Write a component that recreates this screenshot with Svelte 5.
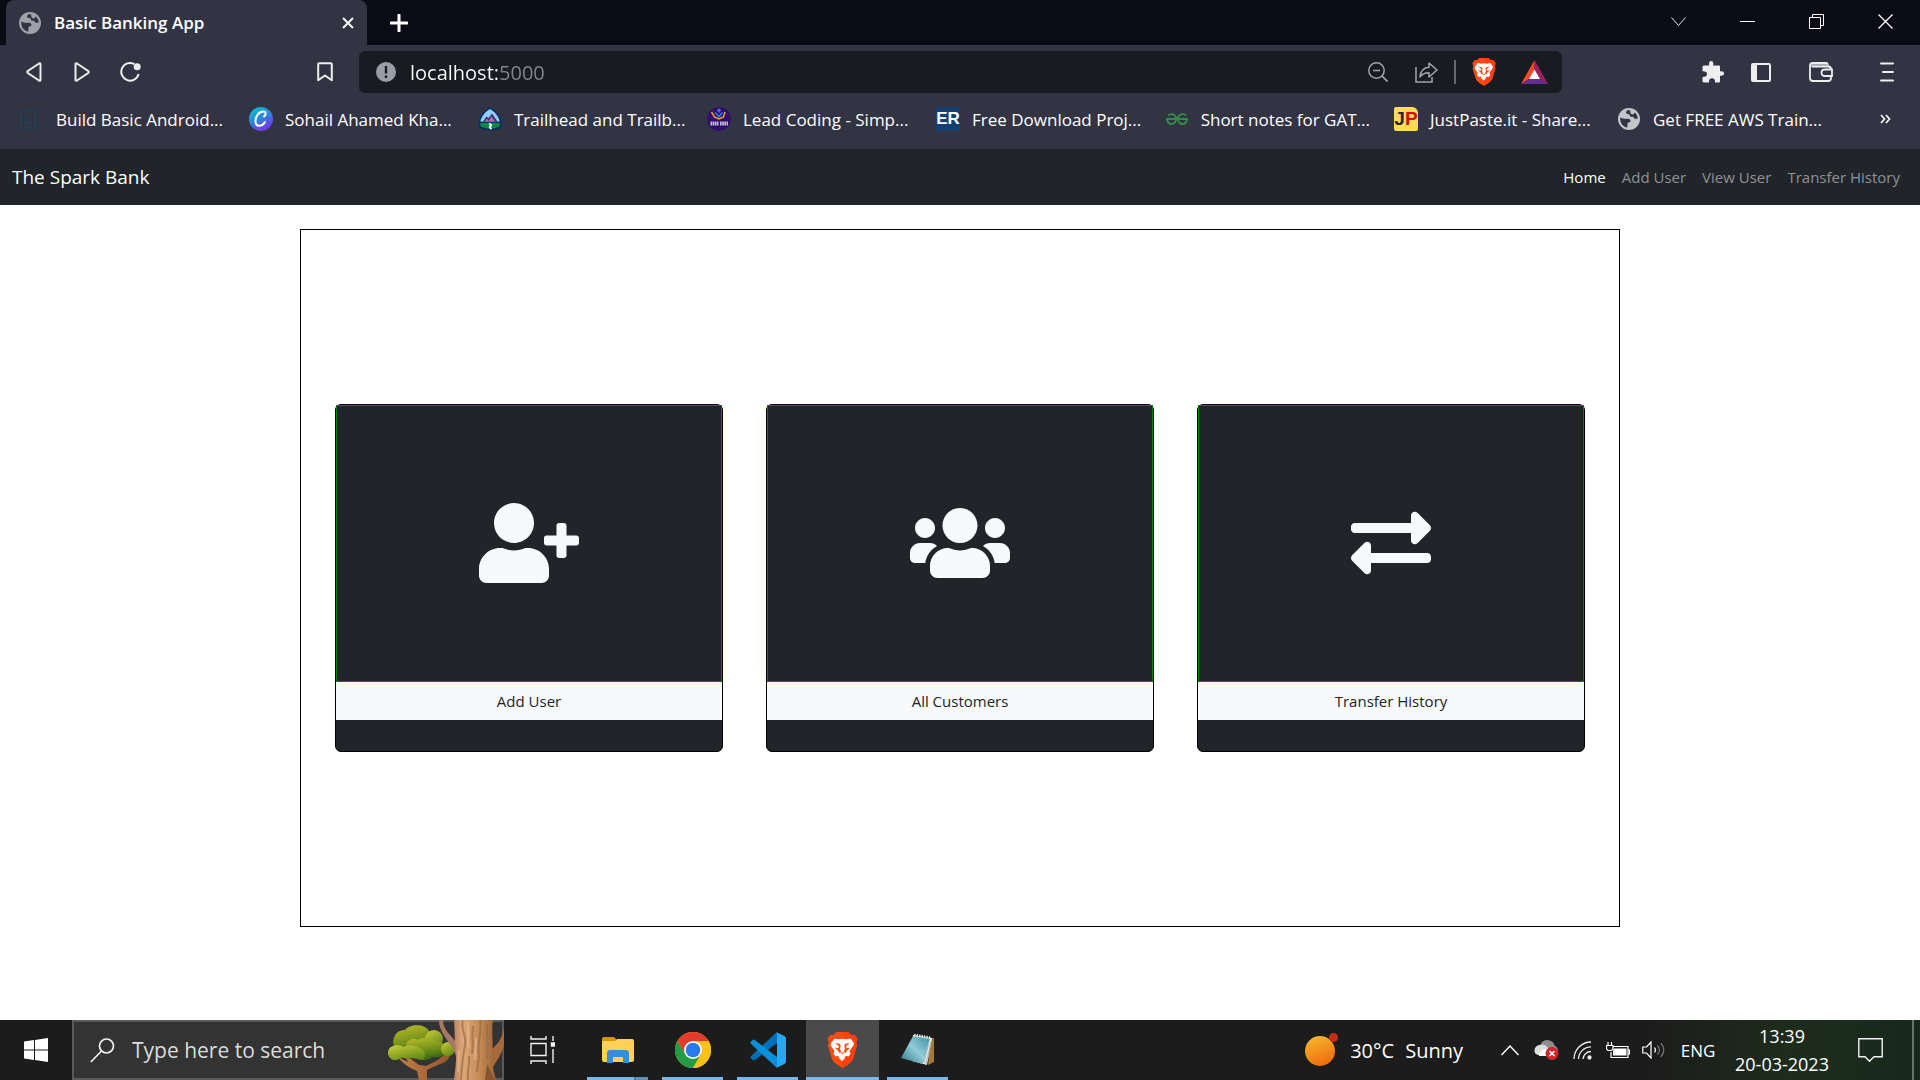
<script>
  const bookmarks = [
    { icon: 'code', label: 'Build Basic Android...' },
    { icon: 'canva', label: 'Sohail Ahamed Kha...' },
    { icon: 'trail', label: 'Trailhead and Trailb...' },
    { icon: 'lead', label: 'Lead Coding - Simp...' },
    { icon: 'er', label: 'Free Download Proj...' },
    { icon: 'gfg', label: 'Short notes for GAT...' },
    { icon: 'jp', label: 'JustPaste.it - Share...' },
    { icon: 'globe', label: 'Get FREE AWS Train...' }
  ];

  const links = ['Home', 'Add User', 'View User', 'Transfer History'];

  const cards = [
    {
      label: 'Add User',
      width: 640,
      path: 'M624 208h-64v-64c0-8.8-7.2-16-16-16h-32c-8.8 0-16 7.2-16 16v64h-64c-8.8 0-16 7.2-16 16v32c0 8.8 7.2 16 16 16h64v64c0 8.8 7.2 16 16 16h32c8.8 0 16-7.2 16-16v-64h64c8.8 0 16-7.2 16-16v-32c0-8.8-7.2-16-16-16zm-400 48c70.7 0 128-57.3 128-128S294.7 0 224 0 96 57.3 96 128s57.3 128 128 128zm89.6 32h-16.7c-22.2 10.2-46.9 16-72.9 16s-50.6-5.8-72.9-16h-16.7C60.2 288 0 348.2 0 422.4V464c0 26.5 21.5 48 48 48h352c26.5 0 48-21.5 48-48v-41.6c0-74.2-60.2-134.4-134.4-134.4z'
    },
    {
      label: 'All Customers',
      width: 640,
      path: 'M96 224c35.3 0 64-28.7 64-64s-28.7-64-64-64-64 28.7-64 64 28.7 64 64 64zm448 0c35.3 0 64-28.7 64-64s-28.7-64-64-64-64 28.7-64 64 28.7 64 64 64zm32 32h-64c-17.6 0-33.5 7.1-45.1 18.6 40.3 22.1 68.9 62 75.1 109.4h66c17.7 0 32-14.3 32-32v-32c0-35.3-28.7-64-64-64zm-256 0c61.9 0 112-50.1 112-112S381.9 32 320 32 208 82.1 208 144s50.1 112 112 112zm76.8 32h-8.3c-20.8 10-43.9 16-68.5 16s-47.6-6-68.5-16h-8.3C179.6 288 128 339.6 128 403.2V432c0 26.5 21.5 48 48 48h288c26.5 0 48-21.5 48-48v-28.8c0-63.6-51.6-115.2-115.2-115.2zm-223.7-13.4C161.5 263.1 145.6 256 128 256H64c-35.3 0-64 28.7-64 64v32c0 17.7 14.3 32 32 32h65.9c6.3-47.4 34.9-87.3 75.2-109.4z'
    },
    {
      label: 'Transfer History',
      width: 512,
      path: 'M0 168v-16c0-13.255 10.745-24 24-24h360V80c0-21.367 25.899-32.042 40.971-16.971l80 80c9.372 9.373 9.372 24.569 0 33.941l-80 80C409.956 271.982 384 261.456 384 240v-48H24c-13.255 0-24-10.745-24-24zm488 152H128v-48c0-21.314-25.862-32.08-40.971-16.971l-80 80c-9.372 9.373-9.372 24.569 0 33.941l80 80C102.057 463.997 128 453.437 128 432v-48h360c13.255 0 24-10.745 24-24v-16c0-13.255-10.745-24-24-24z'
    }
  ];

  let url = $state('localhost:5000');
</script>

{#snippet globe(color, back)}
  <svg width="22" height="22" viewBox="0 0 22 22" fill="none">
    <circle cx="11" cy="11" r="11" fill={color} />
    <path d="M2.300 9.500c2 .8 4.500 1.800 6.700 1.300 2-.3 3.500.5 3.500 2 0 1-.8 1.600-2 1.700-.8.1-1 .8-1 1.800l-.2 3.200C5 19 1.800 15 2.300 9.500z" fill={back} />
    <path d="M9 2.500C8 4 7.500 5.800 9.500 6c1.800.2 2 .2 2.300 1.500.3 1.300 1.500 1.500 2.800 1.300 1 0 1.200 1.400 2.200 1.900 1 .4 2-.2 3-.1-.2-2.500-1.300-4.600-3-6l-1.500 1.900-2.500-.5-.8-3.700c-1.200-.2-2.200-.2-3 .2z" fill={back} />
  </svg>
{/snippet}

{#snippet lion(w, h)}
  <svg width={w} height={h} viewBox="0 0 30 36">
    <path d="M9 0h12l3 3 3-.3 3 4-1.200 4 .8 3-4 13c-1 3.500-6 6.300-10.600 9.300C10.400 33 5.400 30.200 4.400 26.700L.4 13.700l.8-3L0 6.700l3-4 3 .3z" fill="#fb4b12" />
    <path d="M21 0l3 3 3-.3 3 4-1.200 4 .8 3-4 13c-1 3.500-6 6.300-10.600 9.300V0z" fill="#ff3a0c" opacity=".6" />
    <path d="M7 6.500l4 .8 4-.6 4 .6 4-.8 3.500 4.500-.6 2.500-3.900 5.500 1 2.800-2 2.700-2.500-.8-1.500 2 .3.700-2.800 2.500-2.800-2.500.3-.7-1.500-2-2.500.8-2-2.700 1-2.800-3.900-5.500L3.500 11z" fill="#fff" />
    <path d="M7.500 11l4.500.8 1.200 1.400-.6 3.600 1 3.200-1.600 1.200-1.300-2.400-3.700-3.300 3.800.8.700-2zM22.500 11l-4.500.8-1.200 1.400.6 3.600-1 3.200 1.600 1.200 1.300-2.400 3.700-3.300-3.800.8-.7-2zM13 20.500h4l-2 1.800z" fill="#fb4b12" />
  </svg>
{/snippet}

<div class="screen">
  <header class="browser">
    <div class="tabs">
      <div class="tab">
        {@render globe('#9fa1aa', '#323443')}
        <span class="tab-title">Basic Banking App</span>
        <button class="plain" aria-label="Close tab">
          <svg width="12" height="12" viewBox="0 0 12 12"><path d="M1 1l10 10M11 1L1 11" stroke="#f4f4f6" stroke-width="2" /></svg>
        </button>
      </div>
      <button class="plain new-tab" aria-label="New tab">
        <svg width="18" height="18" viewBox="0 0 18 18"><path d="M9 1v16M1 9h16" stroke="#fff" stroke-width="3" stroke-linecap="round" /></svg>
      </button>
      <div class="window-buttons">
        <button class="plain caption" aria-label="Search tabs">
          <svg width="15" height="10" viewBox="0 0 15 10"><path d="M.5.5l7 8 7-8" fill="none" stroke="#e5e5ea" /></svg>
        </button>
        <button class="plain caption" aria-label="Minimise">
          <svg width="15" height="15" viewBox="0 0 15 15"><path d="M0 7.500h15" stroke="#fff" /></svg>
        </button>
        <button class="plain caption" aria-label="Restore">
          <svg width="15" height="15" viewBox="0 0 15 15" fill="none" stroke="#fff"><path d="M.5 3.500h11v11H.5zM3.500 3.500v-3h11v11h-3" /></svg>
        </button>
        <button class="plain caption" aria-label="Close">
          <svg width="15" height="15" viewBox="0 0 15 15"><path d="M.5.5l14 14M14.500.5l-14 14" stroke="#fff" stroke-width="1.300" /></svg>
        </button>
      </div>
    </div>

    <div class="toolbar">
      <div class="tools-left">
        <button class="plain tool" aria-label="Back">
          <svg width="16" height="20" viewBox="0 0 16 20"><path d="M13 1.500q1.500-.8 1.500 1v15q0 1.800-1.500 1L1.800 11q-1-1 0-2z" fill="none" stroke="#eee" stroke-width="2" /></svg>
        </button>
        <button class="plain tool" aria-label="Forward">
          <svg width="16" height="20" viewBox="0 0 16 20"><path d="M3 1.500q-1.500-.8-1.500 1v15q0 1.800 1.500 1L14.200 11q1-1 0-2z" fill="none" stroke="#eee" stroke-width="2" /></svg>
        </button>
        <button class="plain tool" aria-label="Reload">
          <svg width="21" height="20" viewBox="0 0 21 20"><path d="M14.500 2.200A8.800 8.800 0 1 0 18.600 12" fill="none" stroke="#eee" stroke-width="2" /><circle cx="17.200" cy="4.800" r="3.500" fill="#eee" /></svg>
        </button>
        <button class="plain tool mark" aria-label="Bookmark this page">
          <svg width="16" height="20" viewBox="0 0 16 20"><path d="M1.200 2.200q0-1 1-1h11.600q1 0 1 1v16l-6.800-4.700-6.800 4.700z" fill="none" stroke="#eee" stroke-width="2" stroke-linejoin="round" /></svg>
        </button>
      </div>
      <div class="address">
        <button class="plain" aria-label="Site information">
          <svg width="20" height="20" viewBox="0 0 20 20"><circle cx="10" cy="10" r="10" fill="#9b9da6" /><path d="M10 4v7.500M10 13.500v2.500" stroke="#191b23" stroke-width="2.400" /></svg>
        </button>
        <input class="url" aria-label="Address" bind:value={url} />
        <button class="plain tool" aria-label="Zoom">
          <svg width="20" height="20" viewBox="0 0 20 20" fill="none" stroke="#a4a5ab" stroke-width="1.500"><circle cx="8.500" cy="8.500" r="7.700" /><path d="M5 8.500h7M14 14l5.500 5.500" stroke-width="1.700" /></svg>
        </button>
        <button class="plain tool share" aria-label="Share">
          <svg width="23" height="22" viewBox="0 0 23 22" fill="none" stroke="#a4a5ab" stroke-width="1.500"><path d="M1 6v15h16v-5" /><path d="M14 2l8 7-8 7v-4.200c-4-.2-6.500.8-9 4.200.5-5.500 3.500-9.500 9-9.800z" stroke-linejoin="round" /></svg>
        </button>
        <span class="divider"></span>
        <button class="plain reward" aria-label="Brave Shields">{@render lion(24, 28)}</button>
        <button class="plain reward" aria-label="Brave Rewards">
          <svg width="27" height="24" viewBox="0 0 27 24"><path d="M13.500 0L0 24l8-5 5.500-9z" fill="#ff4724" /><path d="M13.500 0L27 24l-8-5-5.500-9z" fill="#9e1f63" /><path d="M0 24h27l-8-5H8z" fill="#662d91" /><path d="M13.500 9.500l5.500 9.500H8z" fill="#fff" /></svg>
        </button>
      </div>
      <div class="tools-right">
        <button class="plain tool" aria-label="Extensions">
          <svg width="22" height="22" viewBox="0 0 22 22"><path d="M2 4.500h5.200c-.5-3 .3-4.500 2-4.500s2.500 1.500 2 4.500H17q1 0 1 1v5c2.500-.6 4 .3 4 2s-1.500 2.600-4 2v5.500q0 1.500-1 1.500h-4c.3-3-1-4.300-3-4.300s-3.200 1.300-3 4.300H2q-1.500 0-1.500-1.500v-4C3.500 16.200 5 15 5 13s-1.500-3-4.500-2.800V6q0-1.500 1.500-1.500z" fill="#eee" /></svg>
        </button>
        <button class="plain tool" aria-label="Sidebar">
          <svg width="20" height="19" viewBox="0 0 20 19"><rect x="1" y="1" width="18" height="17" rx="1" fill="none" stroke="#eee" stroke-width="2" /><path d="M1 1h5v17H1z" fill="#eee" /></svg>
        </button>
        <button class="plain tool wallet" aria-label="Wallet">
          <svg width="24" height="20" viewBox="0 0 24 20" fill="none" stroke="#eee" stroke-width="1.800"><path d="M1 3v13q0 3 3 3h15q3 0 3-3v-2M22 8V7q0-2.500-3-2.500H2.500M1 3.500Q1 1 3.500 1H17q2 0 2 3.500" /><path d="M2 3h17" stroke="#b9bac2" /><path d="M23 7.500h-7q-3.500 0-3.500 3.200t3.500 3.300h7z" /></svg>
        </button>
        <button class="plain tool menu" aria-label="Menu">
          <svg width="14" height="20" viewBox="0 0 14 20"><path d="M1 1.500h12M3 10h10M1 18.500h12" stroke="#eee" stroke-width="2" stroke-linecap="round" /></svg>
        </button>
      </div>
    </div>

    <nav class="bookmarks" aria-label="Bookmarks">
      {#each bookmarks as item}
        <a class="bookmark {item.icon}-item" href="#top">
          <span class="favicon">
            {#if item.icon === 'code'}
              <svg width="24" height="24" viewBox="0 0 24 24" fill="none" stroke="#1e4358" stroke-width="1.500"><path d="M1 3h14v18H1zM10.500 10.500Q8 9 6 11t0 4q2 1.500 4.500 0M18 21h3M23.500 19v3" /></svg>
            {:else if item.icon === 'canva'}
              <svg width="24" height="24" viewBox="0 0 24 24"><defs><linearGradient id="cv" x1=".2" y1="0" x2=".7" y2="1"><stop offset="0" stop-color="#08c4cc" /><stop offset=".5" stop-color="#2f83e0" /><stop offset="1" stop-color="#7d2ae8" /></linearGradient></defs><circle cx="12" cy="12" r="12" fill="url(#cv)" /><path d="M15 9.500c2-1.500 2.500-5-.5-5C10 4.500 6.500 9 6.500 14c0 6.500 6.500 6 9.500 1" fill="none" stroke="#fff" stroke-width="2" stroke-linecap="round" /></svg>
            {:else if item.icon === 'trail'}
              <svg width="24" height="24" viewBox="0 0 24 24"><path d="M12 .5C16 1 23 9 23.500 15v5Q18 23.500 12 23.500T.5 20v-5C1 9 8 1 12 .5z" fill="#092e66" /><path d="M12 2.200c3.500 1 9 7.500 9.700 12.300H2.300C3 9.700 8.500 3.200 12 2.200z" fill="#8fd0fa" /><path d="M5 14.500l3.500-5 2 1.500L14 6.500l5.500 8z" fill="#4a2e73" /><path d="M7 14.500l2-3 1.500 2.500 3-4.500 3.500 5z" fill="#a36fb4" /><path d="M2.300 16h19.400v3Q17 21.800 12 21.800T2.300 19z" fill="#0b8c44" /><path d="M11 16.500q4 1.500 1 2.500-1 1.200 1.500 3" fill="none" stroke="#fff" stroke-width="1.800" /></svg>
            {:else if item.icon === 'lead'}
              <svg width="24" height="24" viewBox="0 0 24 24"><circle cx="12" cy="12" r="12" fill="#31106b" /><path d="M4.500 5l3 5 4.500 2 4.500-2 1.500-5" fill="none" stroke="#e5a52a" stroke-width="1.500" /><path d="M8 5.500l4 4 3.500-4M12 1.500v4M10 3.500h4" fill="none" stroke="#3979df" stroke-width="1.600" /><path d="M3.500 16.500h8M13 16.500h8" stroke="#c6b9d6" stroke-width="4" stroke-dasharray="1.700 .5" /></svg>
            {:else if item.icon === 'er'}
              <span class="er">ER</span>
            {:else if item.icon === 'gfg'}
              <svg width="22" height="12" viewBox="0 0 22 12" fill="none" stroke="#2f8d46" stroke-width="1.900"><path d="M0 6h22M2 2.500Q5 0 8 2t2 5q-1 4-4.500 4T1 6.500M20 2.500Q17 0 14 2t-2 5q1 4 4.500 4T21 6.500" /></svg>
            {:else if item.icon === 'jp'}
              <span class="jp">J<b>P</b></span>
            {:else}
              {@render globe('#c3c5ca', '#323443')}
            {/if}
          </span>
          <span>{item.label}</span>
        </a>
      {/each}
      <button class="plain overflow" aria-label="More bookmarks">
        <svg width="11" height="10" viewBox="0 0 11 10"><path d="M1 1l3.500 4L1 9M6 1l3.500 4L6 9" fill="none" stroke="#eee" stroke-width="1.800" /></svg>
      </button>
    </nav>
  </header>

  <nav class="site-nav" id="top">
    <a class="brand" href="#top">The Spark Bank</a>
    <div class="links">
      {#each links as link, i}
        <a href="#top" class:active={i === 0}>{link}</a>
      {/each}
    </div>
  </nav>

  <main>
    <section class="frame">
      {#each cards as card}
        <article class="card">
          <div class="picture">
            <svg height="80" viewBox="0 0 {card.width} 512" fill="#f8f9fa"><path d={card.path} /></svg>
          </div>
          <a class="label" href="#top">{card.label}</a>
        </article>
      {/each}
    </section>
  </main>

  <footer class="taskbar">
    <button class="plain start" aria-label="Start">
      <svg width="24" height="24" viewBox="0 0 24 24"><path d="M0 3.500l10-1.400v9.400H0zM11 2l13-2v11.500H11zM0 12.500h10v9.400L0 20.500zM11 12.500h13V24l-13-2z" fill="#fff" /></svg>
    </button>
    <label class="search">
      <svg width="25" height="25" viewBox="0 0 25 25" fill="none" stroke="#f2f2f2" stroke-width="1.700"><circle cx="16.500" cy="8" r="7" /><path d="M11.500 13L.8 24" /></svg>
      <input type="text" placeholder="Type here to search" aria-label="Type here to search" />
      <svg class="trees" width="119" height="60" viewBox="0 0 119 60">
        <defs>
          <linearGradient id="leaf" x1=".3" y1="0" x2=".6" y2="1"><stop offset="0" stop-color="#b3b727" /><stop offset=".5" stop-color="#76931b" /><stop offset="1" stop-color="#2f6112" /></linearGradient>
          <linearGradient id="leaf2" x1=".2" y1="0" x2=".8" y2="1"><stop offset="0" stop-color="#c3c838" /><stop offset="1" stop-color="#5d8614" /></linearGradient>
          <linearGradient id="bark"><stop offset="0" stop-color="#b98564" /><stop offset=".2" stop-color="#dda878" /><stop offset=".6" stop-color="#c58b58" /><stop offset="1" stop-color="#9a6435" /></linearGradient>
          <linearGradient id="stem"><stop offset="0" stop-color="#c07c47" /><stop offset="1" stop-color="#93592c" /></linearGradient>
        </defs>
        <path d="M13 37q6 9 19 14l2 9h8V50q10-5 16-7 6-3 7-8l-4-2-8 7-12 6-7-1-8-6-6-3 3 6z" fill="url(#stem)" />
        <path d="M9 26C6 18 12 9 20 10 24 4 40 3 44 11c5 4 5 14 0 18l-12 8-18-2z" fill="url(#leaf)" />
        <circle cx="49" cy="19" r="9" fill="url(#leaf2)" />
        <path d="M21 24c3-6 9-6 12-4 4-3 11-3 16 1 8-1 12 5 11 9 0 7-7 8-13 7-5 6-17 3-20-2z" fill="url(#leaf)" />
        <path d="M3 33c0-9 12-9 15-6 8-3 14-1 19 2 5 5 3 9 1 11l-12-2c-4 2-7-1-10 0-7 5-13 0-13-5z" fill="url(#leaf2)" />
        <circle cx="63" cy="29" r="7" fill="url(#leaf2)" />
        <path d="M54 0h4c0 10 8 15 13 22v14C67 22 54 15 54 0z" fill="#a67962" />
        <path d="M119 8c-3 14-8 17-13 22v22c3-9 10-15 13-27z" fill="#a7683b" />
        <path d="M69 0h39c-2 12 1 25-1 36 0 9 2 17 4 24H69c2-15 3-25 1-38z" fill="url(#bark)" />
        <path d="M78 0c-3 8 4 16 2 25s-3 20-4 35M88 6c-2 12 1 17-1 28M95 0c2 13-3 22-1 36l-2 16M102 4c-1 14 2 24 0 34M84 36c1 8-2 14-1 24" fill="none" stroke="#9a6c46" stroke-width="2" opacity=".7" />
        <path d="M83 2c1 12-1 18 1 26M91 18l-1 22M74 30l-1 22" fill="none" stroke="#ebbd92" stroke-width="2" opacity=".6" />
        <path d="M102 44l8 16h-10z" fill="#845630" />
      </svg>
    </label>
    <button class="plain app" aria-label="Task view">
      <svg width="25" height="28" viewBox="0 0 25 28" fill="none" stroke="#f2f2f2" stroke-width="1.400"><path d="M1 0v3h15V0M1 28v-3h15v3M1 7.500h15v12H1zM23 0v5M23 13v14" /><path d="M21.500 7h3v3h-3z" fill="#fff" /></svg>
    </button>
    <button class="plain app open multi" aria-label="File Explorer">
      <svg width="32" height="28" viewBox="0 0 32 28"><path d="M0 3q0-2 2-2h10l2 2v4H0z" fill="#d99604" /><path d="M0 5h13l2-2h15q2 0 2 2v19q0 2-2 2H2q-2 0-2-2z" fill="#ffd257" /><path d="M5 17q0-3 3-3h16q3 0 3 3v10h-6v-6H11v6H5z" fill="#348fd8" /></svg>
    </button>
    <button class="plain app open" aria-label="Chrome">
      <svg width="36" height="36" viewBox="0 0 36 36"><circle cx="18" cy="18" r="18" fill="#fbc116" /><path d="M2.400 9A18 18 0 0 1 33.600 9H18L10.200 22.500z" fill="#e33b2e" /><path d="M2.400 9A18 18 0 0 0 18 36l7.800-13.500H10.200z" fill="#249a42" /><path d="M33.600 9H18l7.800 13.500L18 36A18 18 0 0 0 33.600 9z" fill="#fbc116" /><circle cx="18" cy="18" r="9" fill="#fff" /><circle cx="18" cy="18" r="7.300" fill="#2a79ee" /></svg>
    </button>
    <button class="plain app open" aria-label="Visual Studio Code">
      <svg width="36" height="36" viewBox="0 0 36 36"><path d="M27 0L.8 24.200q-.8 1 0 2l2 1.800q1 .8 2 0L27 11z" fill="#0070b8" /><path d="M27 36L.8 11.800q-.8-1 0-2L2.800 8q1-.8 2 0L27 25z" fill="#0a8fd8" /><path d="M26 0l8.500 4Q36 5 36 6.500v23q0 1.500-1.500 2.500L26 36q1-.5 1-2V2q0-1.500-1-2z" fill="#28a8f2" /></svg>
    </button>
    <button class="plain app open current" aria-label="Brave">{@render lion(31, 36)}</button>
    <button class="plain app open" aria-label="Notepad">
      <svg width="34" height="32" viewBox="0 0 34 32"><defs><linearGradient id="np" x1="0" y1="1" x2="1" y2="0"><stop offset="0" stop-color="#2d7382" /><stop offset=".5" stop-color="#8fcdd7" /><stop offset="1" stop-color="#3e8ea0" /></linearGradient></defs><path d="M29 4l4 0v24l-6 3z" fill="#a27936" /><path d="M12 1l19 3-5 27-15-4z" fill="#e5edf0" /><path d="M12 2l17 2-7 26L0 24z" fill="url(#np)" /><path d="M30 8l-5 22M28 8l-5 21" stroke="#a8b6bb" /><path d="M13 1l17 3" stroke="#ddd" stroke-width="3" stroke-dasharray="1.500 1" /></svg>
    </button>

    <div class="tray">
      <button class="plain weather">
        <svg width="34" height="34" viewBox="0 0 34 34"><defs><linearGradient id="sun" x1=".2" y1="0" x2=".6" y2="1"><stop offset="0" stop-color="#f5b82e" /><stop offset="1" stop-color="#ef6b0b" /></linearGradient></defs><circle cx="15" cy="18" r="15" fill="url(#sun)" /><circle cx="28.500" cy="4.500" r="4.500" fill="#c62c1a" /></svg>
        <span>30°C</span><span>Sunny</span>
      </button>
      <button class="plain status" aria-label="Show hidden icons">
        <svg width="18" height="11" viewBox="0 0 18 11"><path d="M.5 10L9 1l8.500 9" fill="none" stroke="#fff" stroke-width="1.400" /></svg>
      </button>
      <button class="plain status" aria-label="OneDrive">
        <svg width="25" height="22" viewBox="0 0 25 22"><path d="M6 8Q7 1 13 1t8 6q3 1 3 5L12 14z" fill="#8d8d8d" /><path d="M4 16Q0 15 .5 11T5 6q6-2 9 3l-3 8z" fill="#ddd" /><path d="M5 15q2-5 7-5l2 7H5z" fill="#fff" /><circle cx="18" cy="14.500" r="6.500" fill="#d8222c" /><path d="M15.500 12l5 5M20.500 12l-5 5" stroke="#fff" stroke-width="1.600" /></svg>
      </button>
      <button class="plain status" aria-label="Network">
        <svg width="19" height="19" viewBox="0 0 19 19" fill="none" stroke="#eee" stroke-width="1.300"><path d="M1 18A17 17 0 0 1 18 1M5.500 18A12.500 12.500 0 0 1 18 5.800M10 18a8 8 0 0 1 8-7.500" /><circle cx="16.500" cy="16.500" r="1.500" fill="#eee" /></svg>
      </button>
      <button class="plain status" aria-label="Battery">
        <svg width="24" height="17" viewBox="0 0 24 17" fill="none" stroke="#fff" stroke-width="1.200"><path d="M7 4.500h15v11H5V10M22.500 8h1v4h-1" /><path d="M8 6.500h12.500v7H7V9z" fill="#fff" stroke="none" /><path d="M2 0v3.500M5.500 0v3.500M.5 3.500h6.500V7L5.500 8.500H2L.5 7z" /></svg>
      </button>
      <button class="plain status" aria-label="Volume">
        <svg width="24" height="18" viewBox="0 0 24 18" fill="none" stroke="#fff" stroke-width="1.200"><path d="M.8 6h3.700L9 1v16l-4.500-5H.8z" /><path d="M12.500 6.500q2 2.500 0 5" /><path d="M15.500 4.500q4 4.500 0 9M18.800 2q6 7 0 14" stroke="#777" /></svg>
      </button>
      <button class="plain language">ENG</button>
      <button class="plain clock"><span>13:39</span><span>20-03-2023</span></button>
      <button class="plain notice" aria-label="Notifications">
        <svg width="25" height="25" viewBox="0 0 25 25"><path d="M.8.8h23.400v18H16l-4.500 4.500-4.500-4.500H.8z" fill="none" stroke="#f2f2f2" stroke-width="1.400" /></svg>
      </button>
      <span class="peek"></span>
    </div>
  </footer>
</div>

<style>
  :global(body) {
    margin: 0;
    background: #fff;
  }

  .screen {
    display: flex;
    flex-direction: column;
    min-height: 100vh;
    font-family: 'Open Sans', 'Noto Sans', sans-serif;
    font-size: 17px;
    color: #fff;
  }

  .screen :is(div, nav, a, button, input, label, section, article, span) {
    box-sizing: border-box;
  }

  svg {
    display: block;
    flex: none;
  }

  a {
    color: inherit;
    text-decoration: none;
  }

  .plain {
    display: flex;
    align-items: center;
    justify-content: center;
    flex: none;
    padding: 0;
    border: 0;
    background: none;
    color: inherit;
    font: inherit;
  }

  input {
    min-width: 0;
    flex: 1;
    padding: 0;
    border: 0;
    outline: 0;
    background: none;
    color: inherit;
    font: inherit;
  }

  .browser {
    background: #323443;
  }

  .tabs {
    display: flex;
    height: 45px;
    padding-left: 6px;
    background: #0b0b15;
  }

  .tab {
    display: flex;
    align-items: center;
    gap: 13px;
    width: 361px;
    padding: 0 13px;
    border-radius: 8px 8px 0 0;
    background: #323443;
    font-weight: 600;
  }

  .tab-title {
    flex: 1;
  }

  .new-tab {
    width: 64px;
  }

  .window-buttons {
    display: flex;
    margin-left: auto;
  }

  .caption {
    width: 69px;
    height: 43px;
  }

  .toolbar {
    display: flex;
    align-items: center;
    height: 54px;
  }

  .tools-left {
    display: flex;
    width: 359px;
    padding-left: 10px;
    padding-right: 10px;
  }

  .tool {
    width: 48px;
    height: 42px;
  }

  .mark {
    margin-left: auto;
  }

  .address {
    display: flex;
    align-items: center;
    flex: 1;
    height: 42px;
    padding: 0 3px 0 17px;
    border-radius: 6px;
    background: #191b23;
  }

  .url {
    margin-left: 14px;
    font-size: 20px;
    background: linear-gradient(90deg, #fff 88px, #85868c 88px);
    background-clip: text;
    color: transparent;
  }

  .share {
    margin-right: 4px;
  }

  .divider {
    width: 2px;
    height: 24px;
    margin-right: 3px;
    background: #66676d;
  }

  .reward {
    width: 50px;
  }

  .tools-right {
    display: flex;
    justify-content: flex-end;
    width: 358px;
    padding-right: 9px;
  }

  .wallet {
    margin-left: 12px;
  }

  .menu {
    margin-left: 18px;
  }

  .bookmarks {
    display: flex;
    align-items: center;
    gap: 24px;
    height: 50px;
    padding: 0 29px 10px 20px;
  }

  .bookmark {
    display: flex;
    align-items: center;
    gap: 12px;
    width: 205px;
    white-space: nowrap;
  }

  .jp-item {
    width: 199px;
  }

  .favicon {
    display: flex;
    align-items: center;
    justify-content: center;
    width: 24px;
    height: 24px;
  }

  .er,
  .jp {
    width: 24px;
    height: 24px;
    font-family: 'Liberation Sans', sans-serif;
    font-size: 17px;
    font-weight: 700;
    line-height: 24px;
    text-align: center;
  }

  .er {
    background: #143f70;
  }

  .jp {
    border-radius: 2px 6px 2px 2px;
    background: #ffdc55;
    color: #27282c;
    font-size: 19px;
  }

  .jp b {
    color: #d60b0b;
  }

  .overflow {
    margin-left: auto;
  }

  .site-nav {
    display: flex;
    align-items: center;
    justify-content: space-between;
    height: 56px;
    padding: 0 20px 0 12px;
    background: #212529;
  }

  .brand {
    font-size: 19px;
  }

  .links {
    display: flex;
    gap: 16px;
    font-size: 15px;
    color: #909294;
  }

  .active {
    color: #fff;
  }

  main {
    flex: 1;
    padding: 24px 12px;
  }

  .frame {
    display: flex;
    align-items: center;
    gap: 43px;
    max-width: 1320px;
    min-height: 698px;
    margin: 0 auto;
    padding: 0 34px;
    border: 1px solid #000;
  }

  .card {
    flex: 1;
    padding-bottom: 31px;
    border: 1px solid #000;
    border-radius: 6px;
    background: #212529;
  }

  .picture {
    display: flex;
    align-items: center;
    justify-content: center;
    height: 277px;
    padding-bottom: 2px;
    border: 1px solid #008000;
  }

  .label {
    display: block;
    height: 38px;
    background: #f8f9fb;
    color: #212529;
    font-size: 15px;
    line-height: 38px;
    text-align: center;
  }

  .taskbar {
    display: flex;
    height: 60px;
    background: linear-gradient(90deg, #1c1c1c 86%, #1e2c1c 93%, #17291c);
  }

  .start {
    width: 72px;
  }

  .search {
    position: relative;
    display: flex;
    align-items: center;
    gap: 17px;
    width: 432px;
    margin-right: 1px;
    padding: 0 120px 0 16px;
    border: 2px solid #5a5a5a;
    background: #333;
    font-size: 21px;
  }

  .search input::placeholder {
    color: #dcdcdc;
    opacity: 1;
  }

  .trees {
    position: absolute;
    top: -2px;
    right: -2px;
  }

  .app {
    width: 75px;
    border: solid transparent;
    border-width: 0 7px;
  }

  .app.open {
    background: linear-gradient(#76b9ed, #76b9ed) bottom / 100% 3px no-repeat padding-box;
  }

  .app.multi {
    background: linear-gradient(90deg, #76b9ed 47px, #4c7799 47px, #4c7799 49px, #5f93bc 49px) bottom / 100% 3px no-repeat padding-box;
  }

  .app.current {
    border-width: 0 1px;
    background: linear-gradient(#76b9ed, #76b9ed) bottom / 100% 3px no-repeat padding-box, linear-gradient(#4a4a4a, #4a4a4a) padding-box;
  }

  .tray {
    display: flex;
    align-items: center;
    margin-left: auto;
  }

  .weather {
    gap: 11px;
    margin-right: 29px;
    font-size: 20px;
  }

  .status {
    width: 36px;
    height: 60px;
  }

  .language {
    width: 52px;
    height: 60px;
  }

  .clock {
    flex-direction: column;
    width: 116px;
    font-size: 18px;
    line-height: 28px;
  }

  .notice {
    width: 60px;
    height: 60px;
    margin-right: 12px;
  }

  .peek {
    width: 2px;
    height: 60px;
    margin-right: 6px;
    background: #6b756d;
  }
</style>
